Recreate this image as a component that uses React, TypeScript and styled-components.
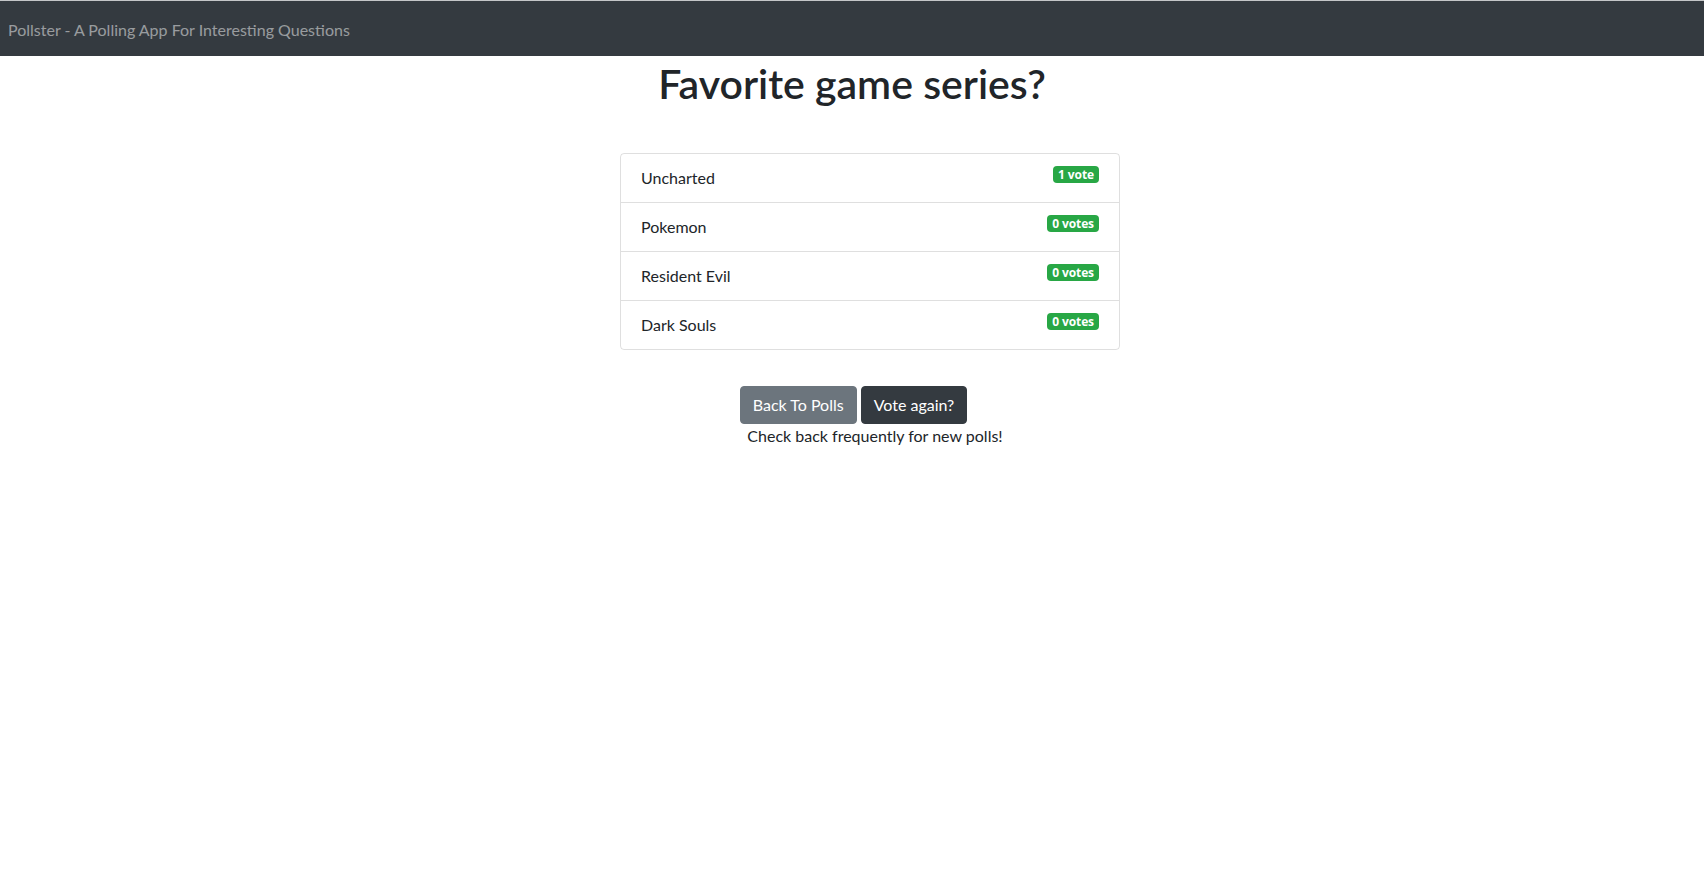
import React from "react";
import styled, { createGlobalStyle } from "styled-components";

const GlobalStyle = createGlobalStyle`
  html, body { margin: 0; padding: 0; background: #fff; }
  body {
    font-family: Lato, "Open Sans", "Liberation Sans", sans-serif;
    font-size: 16px;
    line-height: 1.5;
    color: #212529;
  }
  * { box-sizing: border-box; }
`;

const NavBar = styled.nav`
  height: 56px;
  background: #343a40;
  border-top: 1px solid #c4c6c8;
  display: flex;
  align-items: center;
  padding: 0 8px;
`;

const Brand = styled.span`
  color: rgba(255, 255, 255, 0.5);
  font-size: 16px;
  line-height: 24px;
  margin-top: 2px;
`;

const Main = styled.main`
  display: flex;
  flex-direction: column;
`;

const Title = styled.h1`
  margin: 4px 0 0;
  text-align: center;
  font-size: 41px;
  font-weight: 600;
  line-height: 48px;
  color: #212529;
`;

const List = styled.ul`
  list-style: none;
  margin: 45px 0 0 calc(50% - 232px);
  padding: 0;
  width: 500px;
  border: 1px solid rgba(0, 0, 0, 0.125);
  border-radius: 4px;
`;

const Item = styled.li`
  display: flex;
  justify-content: space-between;
  align-items: flex-start;
  padding: 12px 20px;
  line-height: 24px;
  font-size: 16px;
  & + & {
    border-top: 1px solid rgba(0, 0, 0, 0.125);
  }
`;

const Badge = styled.span`
  display: inline-block;
  background: #28a745;
  color: #fff;
  font-family: "Open Sans", "Liberation Sans", sans-serif;
  font-size: 12px;
  font-weight: 700;
  line-height: 12px;
  padding: 3px 5px 2px;
  border-radius: 4px;
  letter-spacing: -0.1px;
`;

const Actions = styled.div`
  margin-top: 36px;
  display: flex;
  justify-content: center;
  gap: 4px;
  padding-left: 3px;
`;

const Button = styled.button<{ $variant: "secondary" | "dark" }>`
  font-family: inherit;
  font-size: 16px;
  line-height: 24px;
  padding: 6px 12px;
  border-radius: 4px;
  border: 1px solid ${(p) => (p.$variant === "secondary" ? "#6c757d" : "#343a40")};
  background: ${(p) => (p.$variant === "secondary" ? "#6c757d" : "#343a40")};
  color: #fff;
  cursor: pointer;
`;

const Note = styled.p`
  margin: 0;
  text-align: center;
  padding-left: 46px;
  line-height: 24px;
  font-size: 16px;
`;

const options = [
  { name: "Uncharted", votes: 1 },
  { name: "Pokemon", votes: 0 },
  { name: "Resident Evil", votes: 0 },
  { name: "Dark Souls", votes: 0 },
];

export default function App() {
  return (
    <>
      <GlobalStyle />
      <NavBar>
        <Brand>Pollster - A Polling App For Interesting Questions</Brand>
      </NavBar>
      <Main>
        <Title>Favorite game series?</Title>
        <List>
          {options.map((o) => (
            <Item key={o.name}>
              <span>{o.name}</span>
              <Badge>
                {o.votes} {o.votes === 1 ? "vote" : "votes"}
              </Badge>
            </Item>
          ))}
        </List>
        <Actions>
          <Button $variant="secondary">Back To Polls</Button>
          <Button $variant="dark">Vote again?</Button>
        </Actions>
        <Note>Check back frequently for new polls!</Note>
      </Main>
    </>
  );
}
